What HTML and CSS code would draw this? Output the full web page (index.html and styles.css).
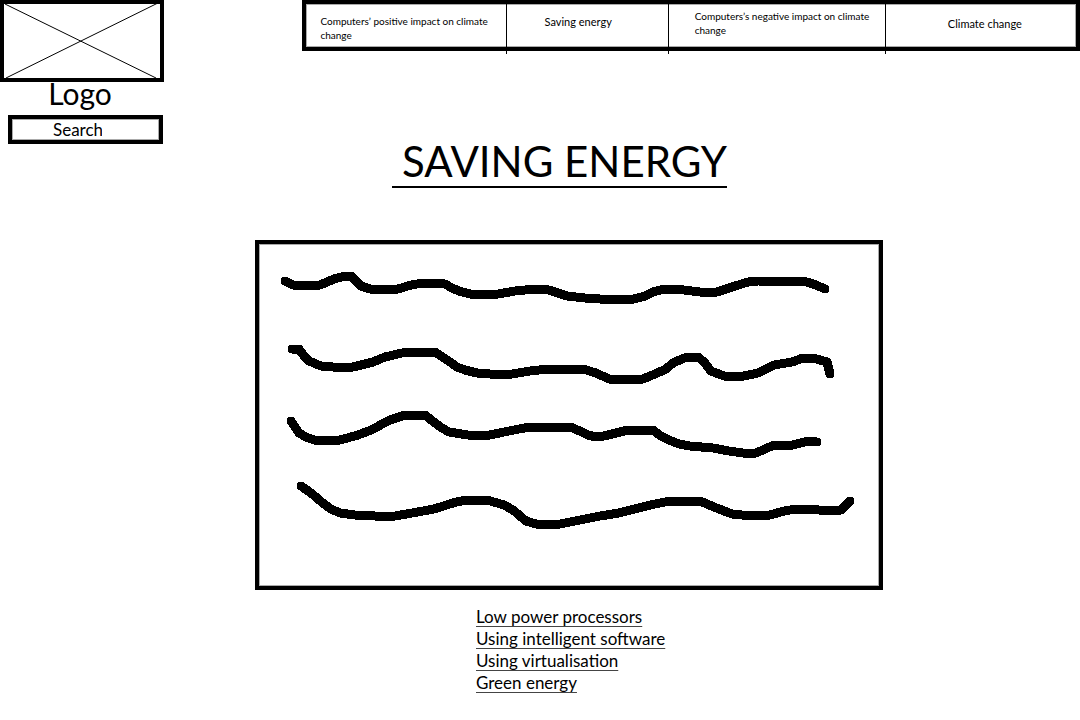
FILE: index.html
```
<!DOCTYPE html>
<html lang="en">
<head>
<meta charset="utf-8">
<title>Saving energy</title>
<link rel="stylesheet" href="styles.css">
</head>
<body>
<header class="header">
  <div class="brand">
    <svg class="logo" viewBox="0 0 164 82" aria-hidden="true">
      <rect x="2" y="2" width="160" height="78" fill="#fff" stroke="#000" stroke-width="4"/>
      <path d="M5 4L156 78M6 78L164 0" fill="none" stroke="#000" stroke-width="1"/>
    </svg>
    <p class="logo-name">Logo</p>
    <input class="search" type="search" placeholder="Search" aria-label="Search">
  </div>
  <nav class="nav" aria-label="Main">
    <div class="cell cell-positive"><a href="#">Computers’ positive impact on climate change</a></div>
    <div class="cell cell-saving"><a href="#">Saving energy</a></div>
    <div class="cell cell-negative"><a href="#">Computers’s negative impact on climate change</a></div>
    <div class="cell cell-climate"><a href="#">Climate change</a></div>
  </nav>
</header>
<main class="main">
  <h1 class="title">SAVING ENERGY</h1>
  <div class="panel">
    <svg class="lines" viewBox="259 244 620 342" role="img" aria-label="Text placeholder">
      <g fill="none" stroke="#000" stroke-width="9" stroke-linecap="round" stroke-linejoin="round" shape-rendering="crispEdges">
        <path d="M285 281L293 285L307 286L320 285L334 279L345 276L351 276L356 281L361 286L370 289L385 290L398 289L411 285L423 283L445 284L452 288L459 291L470 294L484 295L498 294L515 291L535 289L549 290L567 296L585 298L600 299L634 299L645 296L653 292L660 290L672 289L684 290L700 292L717 292L732 287L748 282L758 281L807 282L816 285L825 289"/>
        <path d="M292 349L299 349L304 356L309 361L321 366L333 367L353 367L373 362L385 357L402 353L418 352L435 352L450 362L457 367L465 370L477 373L490 374L512 374L530 371L548 369L583 369L596 373L609 379L626 380L643 379L655 374L666 369L673 363L684 358L691 357L698 357L704 362L711 371L724 376L744 376L758 373L774 365L792 362L803 358L813 358L827 362L830 374"/>
        <path d="M291 421L295 427L299 433L306 437L314 440L327 441L340 440L358 435L371 430L390 420L405 415L425 415L435 423L442 428L449 432L468 435L490 435L504 432L519 429L530 427L571 427L588 435L596 437L604 436L628 430L653 430L661 436L669 440L679 444L690 446L713 448L729 451L743 453L756 453L774 445L793 445L808 441L817 442"/>
        <path d="M301 486L311 493L324 504L331 509L340 513L355 515L375 516L395 516L412 513L434 509L456 502L467 500L487 500L504 505L513 510L526 521L536 524L560 524L575 521L600 516L619 513L650 505L665 502L680 501L700 501L714 507L732 514L742 515L770 515L784 511L796 509L819 510L832 511L841 510L850 501"/>
      </g>
    </svg>
  </div>
  <ul class="links">
    <li><a href="#">Low power processors</a></li>
    <li><a href="#">Using intelligent software</a></li>
    <li><a href="#">Using virtualisation</a></li>
    <li><a href="#">Green energy</a></li>
  </ul>
</main>
</body>
</html>
```
FILE: styles.css
```
* { box-sizing: border-box; }

body {
  margin: 0;
  background: #fff;
  color: #000;
  font-family: Lato, "Noto Sans", sans-serif;
}

a { color: inherit; text-decoration: none; }

.header {
  display: flex;
  justify-content: space-between;
  align-items: flex-start;
}

.brand {
  display: flex;
  flex-direction: column;
  width: 164px;
}

.logo { display: block; width: 100%; }

.logo-name {
  margin: -5px 0 6px;
  padding-right: 4px;
  font-size: 30px;
  line-height: 32px;
  text-align: center;
}

.search {
  margin: 0 1px 0 8px;
  padding: 0 41px;
  height: 29px;
  border: 4px solid #000;
  border-radius: 0;
  box-shadow: inset 0 0 0 1px #aaa;
  appearance: none;
  font: inherit;
  font-size: 17px;
}

.search::placeholder { color: #000; opacity: 1; }

.nav {
  display: grid;
  grid-template-columns: 199fr 162fr 217fr 191fr;
  width: 72%;
  min-height: 51px;
  border: 4px solid #000;
  box-shadow: inset 0 0 0 1px #aaa;
  font-size: 11px;
  line-height: 14px;
}

.cell { position: relative; }
.cell a { display: block; }

.cell + .cell::before {
  content: "";
  position: absolute;
  left: 0;
  top: 0;
  bottom: -7px;
  width: 1px;
  background: #000;
}

.cell-positive { padding: 10px 4px 0 14px; font-size: 10px; }
.cell-saving { padding: 11px 0 0 39px; }
.cell-negative { padding: 5px 4px 0 27px; font-size: 10px; }
.cell-climate { padding: 13px 0 0 63px; }

.main { margin: 0 197px 0 255px; }

.title {
  width: fit-content;
  margin: -8px 0 52px 137px;
  padding-left: 10px;
  border-bottom: 2px solid #000;
  font-size: 42px;
  font-weight: 400;
  line-height: 50px;
  white-space: nowrap;
}

.panel {
  border: 4px solid #000;
  box-shadow: inset 0 0 0 1px #aaa;
}

.lines { display: block; width: 100%; }

.links {
  margin: 16px 0 0 221px;
  padding: 0;
  list-style: none;
  font-size: 17px;
  line-height: 22px;
}

.links a {
  text-decoration: underline;
  text-decoration-color: #444;
  text-decoration-thickness: 1px;
  text-decoration-skip-ink: none;
  text-underline-offset: 3px;
}
```
